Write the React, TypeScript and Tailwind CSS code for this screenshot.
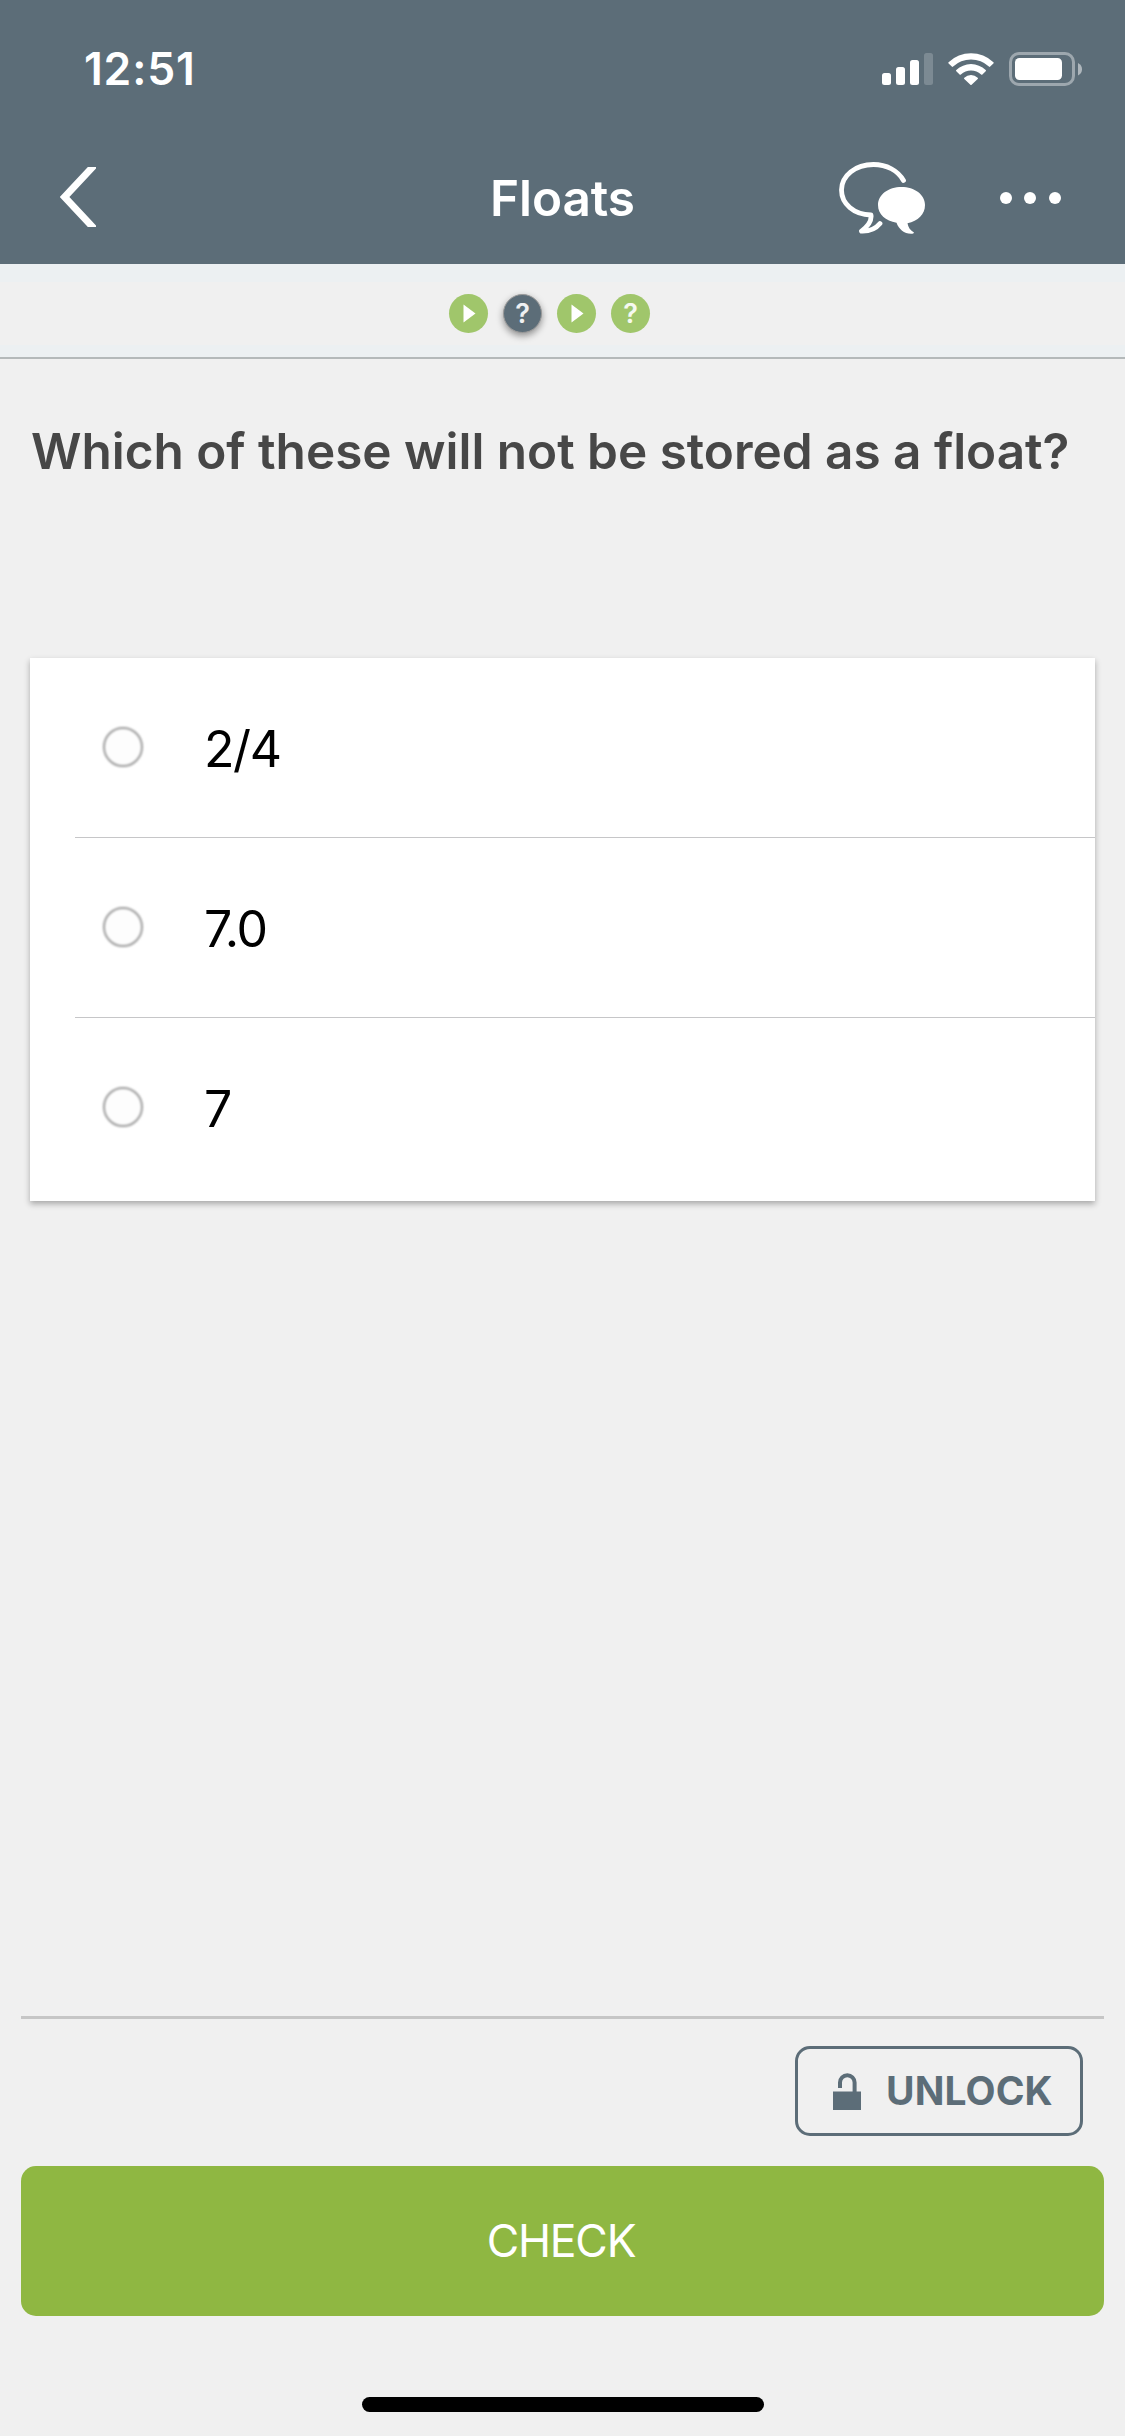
import React from "react";

function StatusBar() {
  return (
    <div className="flex h-[132px] items-start justify-between pl-[84px] pr-[43px] pt-[52px] text-white">
      <span className="-mt-[10px] text-[44.5px] font-semibold leading-[54px] tracking-[0.8px]">12:51</span>
      <div className="flex">
        <svg className="mr-[15px]" width="51" height="34" viewBox="882 52 51 34" fill="white">
          <rect x="882" y="73" width="9" height="12" rx="2.5" />
          <rect x="896" y="67" width="9" height="18" rx="2.5" />
          <rect x="910" y="60" width="9" height="25" rx="2.5" />
          <rect x="924" y="53" width="9" height="32" rx="2.5" opacity=".2" />
        </svg>
        <svg className="mr-[15px]" width="46" height="34" viewBox="0 0 46 34" fill="white">
          <path d="M.6 10.2a32.5 32.5 0 0 1 44.8 0q.7.6 0 1.3l-3.2 3.1q-.6.6-1.3 0a26 26 0 0 0-35.8 0q-.7.6-1.3 0L.6 11.500q-.7-.7 0-1.300z" />
          <path d="M8.300 18a21.300 21.300 0 0 1 29.400 0q.7.6 0 1.300l-3.300 3.100q-.6.6-1.300 0a14.800 14.800 0 0 0-20.200 0q-.7.6-1.300 0L8.300 19.300q-.7-.7 0-1.300z" />
          <path d="M16.300 25.700a10 10 0 0 1 13.400 0q.7.6 0 1.300L23.600 32.800q-.6.6-1.200 0L16.300 27q-.7-.7 0-1.300z" />
        </svg>
        <svg width="73" height="34" viewBox="0 0 73 34" fill="white">
          <rect x="1.500" y="1.500" width="63" height="31" rx="8.500" fill="none" stroke="white" strokeWidth="3" opacity=".4" />
          <rect x="6" y="6" width="47" height="22" rx="4.500" />
          <path d="M69 11v12.500q4-2 4-6.250T69 11z" opacity=".5" />
        </svg>
      </div>
    </div>
  );
}

function NavBar() {
  return (
    <div className="grid h-[132px] grid-cols-[1fr_auto_1fr] px-[60px] text-white">
      <svg className="mt-[35px]" width="36" height="60" viewBox="0 0 36 60">
        <path d="M35 -2.500 4.500 30 35 62.500" fill="none" stroke="white" strokeWidth="7" />
      </svg>
      <h1 className="mt-[36px] text-[49.500px] font-semibold leading-[60px] tracking-[-0.1px]">Floats</h1>
      <div className="flex justify-end">
        <svg className="mr-[75px] mt-[30px]" width="86" height="72" viewBox="0 0 86 72">
          <path
            d="M64.500 18.500C59 8.500 47.500 2.500 34.500 2.500 16.500 2.500 2.500 13.500 2.500 28c0 14 12.500 24.500 29.500 25 1 7-4 12-9.500 16.200 8 .3 14-2.200 18.500-7.700"
            fill="none"
            stroke="white"
            strokeWidth="4.800"
            strokeLinecap="round"
            strokeLinejoin="round"
          />
          <path
            d="M62.500 25C75.500 25 86 32.500 86 43c0 9.500-7 16-17.500 18.200.5 4 3 7.300 6.500 9.300-.6 1.200-1.500 1.400-3 1.300-7-.2-12-4.300-14.500-11C46.500 58.800 39 52.500 39 43c0-10.500 10.500-18 23.500-18z"
            fill="white"
          />
        </svg>
        <svg className="mr-[4px] mt-[60px]" width="61" height="12" viewBox="0 0 61 12" fill="white">
          <circle cx="6" cy="6" r="6" />
          <circle cx="30" cy="6" r="6" />
          <circle cx="55" cy="6" r="6" />
        </svg>
      </div>
    </div>
  );
}

function PlayStep() {
  return (
    <div className="flex size-[39px] items-center justify-center rounded-full bg-[#a0c66b]">
      <svg width="39" height="39" viewBox="0 0 39 39">
        <path d="M14.500 10.500v18l12-9z" fill="white" />
      </svg>
    </div>
  );
}

function QuestionMark() {
  return (
    <span className="text-[27px] font-semibold leading-[39px] text-white/90">?</span>
  );
}

function Lessons() {
  return (
    <div className="h-[95px] border-b-2 border-[#b4b9ba] bg-[#ecf0f2] pt-[18px]">
      <div className="flex h-[63px] items-start gap-[15px] bg-[#f0f0f0] pl-[449px] pt-[12px]">
        <PlayStep />
        <div className="flex size-[39px] justify-center rounded-full border border-[#999] bg-[#5c6d78] shadow-[0_3px_7px_rgba(0,0,0,0.4)]">
          <span className="-mt-px flex">
            <QuestionMark />
          </span>
        </div>
        <PlayStep />
        <div className="flex size-[39px] justify-center rounded-full bg-[#a0c66b]">
          <QuestionMark />
        </div>
      </div>
    </div>
  );
}

function Option({ label, last }: { label: string; last?: boolean }) {
  return (
    <label className={last ? "flex h-[183px]" : "flex h-[180px]"}>
      <span className="w-[45px]" />
      <span className={last ? "flex flex-1 pl-[28px]" : "flex flex-1 border-b border-[#c6c6c8] pl-[28px]"}>
        <span className="mt-[69px] size-[40px] rounded-full border-[2.5px] border-[#9c9c9c] bg-[#fdfdfd] blur-[0.8px]" />
        <span className="ml-[61px] mt-[61px] text-[50px] leading-[60px] tracking-[-1.400px] text-black">{label}</span>
      </span>
    </label>
  );
}

export default function App() {
  return (
    <main className="flex h-[2436px] w-[1125px] flex-col overflow-hidden bg-[#f0f0f0] font-['Inter',sans-serif]">
      <header className="bg-[#5c6d78]">
        <StatusBar />
        <NavBar />
      </header>
      <Lessons />
      <h2 className="ml-[31px] mt-[62px] whitespace-nowrap text-[49.500px] font-semibold leading-[60px] tracking-[-0.02px] text-[#474747]">
        Which of these will not be stored as a float?
      </h2>
      <section className="mx-[30px] mt-[177px] bg-white shadow-[0_3px_6px_rgba(0,0,0,0.3)]">
        <Option label="2/4" />
        <Option label="7.0" />
        <Option label="7" last />
      </section>
      <footer className="mx-[21px] mt-auto flex h-[420px] flex-col border-t-[3px] border-[#c6c6c6]">
        <button className="mr-[21px] mt-[27px] flex h-[90px] w-[288px] items-center self-end rounded-[15px] border-[3px] border-[#5c6d78] pl-[35px] text-[#5c6d78]">
          <svg width="28" height="37" viewBox="0 0 28 37" fill="currentColor">
            <path d="M0 18.500h28V37H0z" />
            <path d="M7 15V9.500a7.300 7.300 0 0 1 14.600 0V19" fill="none" stroke="currentColor" strokeWidth="4" />
          </svg>
          <span className="ml-[25px] text-[39px] font-bold leading-[48px] tracking-[0.1px]">UNLOCK</span>
        </button>
        <button className="mt-[30px] h-[150px] rounded-[15px] bg-[#8fb742] pr-[3px] text-[44.500px] font-normal tracking-[-1.2px] text-white">
          CHECK
        </button>
        <div className="ml-[341px] mt-[81px] h-[15px] w-[402px] rounded-full bg-black" />
      </footer>
    </main>
  );
}
